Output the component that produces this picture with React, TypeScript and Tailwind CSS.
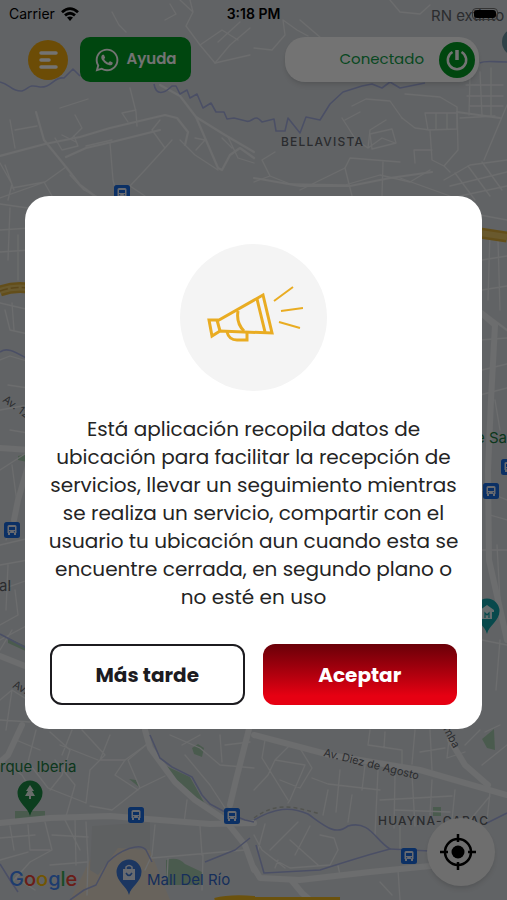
import type { ReactNode } from 'react'
import { FaWhatsapp } from 'react-icons/fa'

const minorRoads = [
  // north-west
  'M112 12 L119 25 L126 32 M190 0 L193 12 L186 26 L200 45 L215 63 L250 55 M193 12 L180 0 M165 20 L176 14 L170 4',
  'M215 63 L230 45 L250 28 M218 42 L240 22 M200 45 L222 30 L238 40',
  'M10 120 L15 148 M15 130 L37 126 M60 108 L88 99 M75 115 L82 128 L72 138',
  'M130 88 L136 112 L137 126 M122 113 L136 110 M122 113 L128 122',
  'M0 163 L12 184 L8 200 M5 165 L14 190 M12 188 L45 182 L66 167 M0 198 L45 182 M44 182 L52 196',
  'M110 143 L113 180 L118 200 M152 130 L165 148 L145 170 L130 186 L145 196 M165 148 L172 140 M160 120 L152 130',
  'M180 140 L195 155 L218 170 M196 150 L205 140 L195 138 M222 138 L232 148 M228 137 L238 158 L254 163',
  'M55 138 L62 150 L78 146 L74 136 M62 135 L76 142 M86 146 L112 140 M70 175 L84 190 L98 197',
  // north-east
  'M283 20 L285 35 L272 50 L254 48 M283 20 L297 30 L308 36 M300 20 L328 44 M390 0 L400 12 L420 14 L430 5',
  'M342 118 L356 140 M352 106 L366 99 L390 101 L402 118 M345 120 L360 112 M356 140 L368 148 L382 138 L395 143 M368 148 L370 130 L386 120',
  'M370 134 L392 129 L396 143 L372 149 Z M402 118 L415 128 L430 130 M425 113 L457 113 L457 129 L428 130 Z M436 113 L436 129 M447 113 L447 129',
  'M405 94 L440 97 L457 107 L458 150 L444 166 M430 130 L432 160 L444 166 L450 172 M460 118 L495 116 M484 160 L507 105',
  'M470 76 L469 115 M480 72 L482 116 M491 68 L491 116 M466 85 L503 85 M467 96 L503 96 M469 106 L503 106',
  'M254 182 L270 176 L290 184 L345 185 L380 175 L410 182 L430 170 M270 176 L262 160 L275 152 M300 190 L345 168 L350 158 L400 162',
  'M345 168 L352 196 M383 162 L382 196 M415 163 L414 150 L432 150 M400 178 L450 196 M444 180 L470 165 L507 160',
  'M455 173 L475 200 M468 166 L490 196 M482 162 L502 190 M450 186 L507 172 M460 196 L507 186',
  // left edge
  'M0 204 L28 208 M10 208 L8 260 M0 230 L30 228 M18 235 L18 280 M0 252 L30 250 M0 303 L30 310 M5 310 L10 330 L28 334 M12 303 L14 330',
  'M0 360 L10 356 L30 362 M8 385 L28 388 M0 410 L28 405 M10 430 L28 433 M0 470 L28 452 M12 465 L18 510 L6 540',
  'M0 545 L30 538 M0 565 L28 560 M8 565 L6 610 M0 590 L28 580 M15 590 L18 615 L0 625 M0 640 L28 625 M0 650 L12 630',
  'M0 700 L12 690 L28 700 M12 690 L6 730 M0 720 L30 722',
  // right edge
  'M480 215 L507 220 M490 232 L488 300 M498 240 L500 310 M482 260 L507 256 M482 290 L507 286 M480 340 L507 338 M482 370 L507 364',
  'M480 395 L507 388 M495 400 L500 430 M482 490 L507 500 M490 515 L507 520 M482 550 L507 550 M497 545 L500 600 M482 640 L507 645 M500 640 L496 690',
  // south-west
  'M36 730 L28 762 L48 788 L86 803 M50 732 L70 750 L62 775 L50 790 M82 730 L105 755 L90 770 L86 803 M110 735 L100 760 L125 760 L146 745',
  'M146 745 L128 760 L140 788 L165 776 M140 788 L112 810 L90 806 M125 760 L115 775 L138 790 M60 745 L98 760 M72 730 L62 755 M16 740 L40 750',
  'M0 760 L22 775 L38 802 M55 760 L75 785 L65 820 L80 850 M75 818 L76 865 M45 822 L52 850 L30 862 L14 880 M28 825 L30 850 L50 850',
  'M0 838 L35 835 M86 822 L88 860 L87 895 M52 835 L88 837 M50 865 L87 862 M10 826 L14 850 M0 860 L28 852 M16 878 L35 890',
  'M155 825 L152 855 L145 870 M187 800 L184 823 M200 826 L202 855 M152 858 L245 850 M168 859 L167 880 M203 855 L202 890',
  'M170 735 L200 748 L220 765 L254 768 M182 745 L200 735 M220 735 L222 762 M185 755 L210 785 L225 808 M225 745 L250 742',
  // south-east
  'M265 740 L262 758 L288 800 M290 745 L275 760 L268 775 L254 790 M275 760 L305 765 M305 765 L290 800 L288 803 M298 745 L312 768 L300 788 L280 780',
  'M328 790 L323 815 M312 778 L328 784 L380 790 M340 770 L336 812 M352 795 L348 822 M365 765 L362 790 M378 770 L375 835 M395 775 L394 828',
  'M370 730 L368 745 L402 750 L402 765 M385 732 L384 748 M415 730 L412 764 M430 730 L432 770 M445 748 L420 752 M450 730 L447 758 L465 752',
  'M412 775 L415 826 M432 780 L430 815 M380 800 L452 796 M395 810 L450 812 M455 790 L452 820 M470 820 L490 796 M490 792 L487 820',
  'M254 835 L262 850 L285 868 M265 824 L258 850 M298 822 L270 850 M310 826 L295 855 M290 840 L318 865 M278 860 L275 868 M320 835 L334 838 L338 850 L330 865 L290 868 L275 860',
  'M465 745 L480 730 M482 765 L507 745 M485 732 L500 725 M400 826 L400 850 M380 882 L392 895 M398 870 L400 900 M338 866 L340 875',
]

const mainRoads = [
  'M0 156 L45 144 L80 137 L110 128 L165 115 L177 118 L188 132 L185 145',
  'M160 85 L180 96 L196 117 L218 168 L222 170 L230 155 L240 148 L254 158',
  'M196 117 L225 135 L254 152',
  'M36 112 L44 140 L66 167 L80 185 L100 200',
  'M66 157 L86 148 L112 142 L160 130',
  'M254 178 L300 186 L350 186 L390 178 L432 172',
  'M457 112 L500 118',
  'M480 310 L507 330',
]

const avenues = [
  'M0 823 L50 818 L110 816 L210 824 L254 823',
  'M22 725 L8 755 L0 762',
  'M145 730 L150 748 L175 782 L195 800 L225 820 L245 845 L254 870',
  'M250 725 L236 780 L230 805',
  'M254 735 L330 755 L420 770 L507 795',
  'M450 740 L465 765 L488 785',
  'M254 868 L260 878 L300 880 L370 872 L440 865',
  'M292 881 L302 893 L310 900',
  'M28 466 L18 500 L14 520',
  'M480 312 L495 325 L491 400 L488 470 L489 560 L507 640',
  'M30 450 L0 448',
  'M0 656 L30 668',
]

const rivers = [
  'M0 82 C10 84 12 92 22 91 C30 88 28 84 40 87 C52 88 54 76 64 78 L73 69 L80 76',
  'M154 84 C156 96 164 94 172 86 L176 86 L180 94 L187 90 L190 98 L197 94 L203 108 L211 103 L216 112 L224 112 L227 119 L234 118 L246 121 C252 124 254 112 262 122 L274 119 L276 131 L285 131 L288 118 L300 133 L306 117 L320 120 L330 104 L343 92 L362 86 L372 84 L382 88 L390 82 L400 88 L425 83',
  'M480 63 C485 60 492 62 507 62',
  'M150 735 L160 758 L172 767 L192 777 L202 795 L210 804 L225 812 L245 820 L254 822',
  'M0 864 L10 880 L18 892 M70 900 L84 890 L96 885 L108 862 C120 850 140 842 146 850 L152 862 M205 862 L235 850 L250 838',
  'M254 820 C275 808 290 806 308 814 C325 826 335 836 348 826 C370 820 375 840 390 849 C370 854 345 862 320 870 L264 873 L256 845',
  'M390 849 L430 851 M487 823 L507 813',
  'M0 634 L30 650',
  'M0 352 C8 346 18 354 30 360',
]

function Bus({ x, y }: { x: number; y: number }) {
  return (
    <g transform={`translate(${x} ${y})`}>
      <rect width="16" height="16" rx="2.5" fill="#1a6be0" />
      <path d="M3.5 4.5q0-1.5 1.5-1.5h6q1.500 0 1.500 1.500V11H3.500z M4 11h2v2H4z M10 11h2v2h-2z" fill="#e8eef8" />
      <path d="M5 5h6v3H5z M5 9.300h1.200v1H5z M9.800 9.300H11v1H9.800z" fill="#1a6be0" />
    </g>
  )
}

function Pin({ x, y, color, children }: { x: number; y: number; color: string; children: ReactNode }) {
  return (
    <g transform={`translate(${x} ${y})`}>
      <path d="M0 0C-2-9-12.500-13-12.500-23A12.500 12.500 0 0 1 12.500-23C12.500-13 2-9 0 0Z" fill={color} />
      {children}
    </g>
  )
}

function CityMap() {
  return (
    <svg
      className="absolute inset-0 h-full w-full"
      viewBox="0 0 507 900"
      preserveAspectRatio="xMidYMid slice"
      role="img"
      aria-label="Mapa"
    >
      <rect width="507" height="900" fill="#d8dce0" />
      <path d="M100 840L150 850L170 900H70Z" fill="#e6dccd" />
      <path d="M92 826L150 822L150 850L118 848L98 875L90 870Z" fill="#d1d4d8" />
      <g fill="#a5cbae">
        <path d="M166 766L190 777L200 795L206 806L196 800L178 784Z" />
        <path d="M192 748L198 744L204 748L202 757L194 754Z" />
        <path d="M166 860Q178 856 185 864L202 872V885H166Z" />
        <rect x="15" y="811" width="30" height="9" />
        <path d="M482 739L494 729L495 750L487 748Z" />
        <rect x="433" y="807" width="8" height="9" />
        <path d="M129 779L136 780L139 787Z" />
        <path d="M18 456L27 454V462L18 460Z" />
        <path d="M8 638L30 648V653L8 643Z" />
      </g>
      <g fill="none" stroke="#eff1f3" strokeLinejoin="round" strokeLinecap="round">
        {minorRoads.map((d) => (
          <path key={d} d={d} strokeWidth="1.300" />
        ))}
        {mainRoads.map((d) => (
          <path key={d} d={d} strokeWidth="2.200" />
        ))}
        {avenues.map((d) => (
          <path key={d} d={d} strokeWidth="6" />
        ))}
      </g>
      <g fill="none" stroke="#a6b0e0" strokeWidth="1.600" strokeLinejoin="round">
        {rivers.map((d) => (
          <path key={d} d={d} />
        ))}
      </g>
      <path d="M254 818C275 803 290 805 320 814" fill="none" stroke="#b5b9b0" strokeDasharray="4 3" strokeWidth="1.500" />
      <g fill="none">
        <path d="M0 291Q14 286 28 288M480 233L507 237" stroke="#dcae3a" strokeWidth="11" />
        <path d="M0 291Q14 286 28 288M480 233L507 237" stroke="#e8c565" strokeWidth="6" />
        <path d="M0 291Q14 286 28 288" stroke="#c99d3a" strokeDasharray="8 3" strokeWidth="1.500" />
        <path d="M215 901Q230 897 254 899L340 900" stroke="#eeb51e" strokeWidth="6" />
      </g>

      <Bus x={114} y={185} />
      <Bus x={4} y={522} />
      <Bus x={483} y={483} />
      <Bus x={501} y={459} />
      <Bus x={128} y={807} />
      <Bus x={224} y={808} />
      <Bus x={401} y={848} />

      <Pin x={30} y={816} color="#1c8a43">
        <path d="M0-31L-4-25H-2L-5-20H-1V-17H1V-20H5L2-25H4Z" fill="#e9f2ec" />
      </Pin>
      <Pin x={129} y={895} color="#3d78d8">
        <path d="M-6-26H6V-15H-6Z" fill="#e8eef8" />
        <path d="M-3-26V-28Q0-31 3-28V-26" fill="none" stroke="#e8eef8" strokeWidth="1.500" />
        <path d="M-3-22Q0-17 3-22" fill="none" stroke="#3d78d8" strokeWidth="1.500" />
      </Pin>
      <Pin x={487} y={634} color="#12a3a8">
        <path d="M-7-24L0-29L7-24V-22H5V-15H-5V-22H-7Z" fill="#e0f2f3" />
        <path d="M-2-16V-21L0-19L2-21V-16" fill="none" stroke="#12a3a8" strokeWidth="1.200" />
      </Pin>
      <circle cx="516" cy="42" r="14" fill="#6c93a0" />

      <g className="font-[Inter,sans-serif]" fill="#5f6368">
        <text x="431" y="21" fontSize="15">RN extinto</text>
        <text x="281" y="146" fontSize="12" className="font-medium tracking-widest">BELLAVISTA</text>
        <text x="378" y="825" fontSize="12" className="font-medium tracking-widest">HUAYNA-CAPAC</text>
        <text fontSize="11" transform="translate(323 756) rotate(14)">Av. Diez de Agosto</text>
        <text fontSize="11" transform="translate(443 729) rotate(62)">mba</text>
        <text fontSize="11" transform="translate(2 401) rotate(36)">Av. 12</text>
        <text fontSize="11" transform="translate(12 687) rotate(28)">Av.</text>
        <text x="-1" y="591" fontSize="15">al</text>
      </g>
      <g className="font-[Inter,sans-serif]" fontSize="15">
        <text x="0" y="772" fill="#1b7a41">rque Iberia</text>
        <text x="476" y="443" fill="#1b7a41">e Sa</text>
        <text x="147" y="885" fill="#3267c9">Mall Del Río</text>
      </g>
      <text x="9" y="886" fontSize="20" className="font-[Inter,sans-serif] font-medium">
        <tspan fill="#4285f4">G</tspan>
        <tspan fill="#ea4335">o</tspan>
        <tspan fill="#fbbc05">o</tspan>
        <tspan fill="#4285f4">g</tspan>
        <tspan fill="#34a853">l</tspan>
        <tspan fill="#ea4335">e</tspan>
      </text>
    </svg>
  )
}

function StatusBar() {
  return (
    <div className="relative grid h-7 grid-cols-3 items-center px-[9px] font-[Inter,sans-serif] text-sm text-black">
      <div className="flex items-center gap-[6px]">
        <span>Carrier</span>
        <svg width="18" height="14" viewBox="0 0 18 14" fill="none" stroke="black" strokeWidth="2.800">
          <path d="M1 5.200Q9-2 17 5.200M4 8.400Q9 4 14 8.400" />
          <path d="M9 14L6 10.600Q9 8.500 12 10.600Z" fill="black" stroke="none" />
        </svg>
      </div>
      <span className="text-center font-semibold">3:18 PM</span>
      <div className="flex justify-end">
        <span className="rounded-[4px] border border-neutral-500 p-px">
          <span className="block h-2 w-[22px] rounded-[3px] bg-black" />
        </span>
      </div>
    </div>
  )
}

function Toolbar() {
  return (
    <header className="relative flex items-center px-[28px] pt-[9px]">
      <button aria-label="Menú" className="flex size-10 items-center justify-center rounded-full bg-[#f0a90e]">
        <svg width="20" height="18" viewBox="0 0 20 18" stroke="white" strokeWidth="3.500" strokeLinecap="round">
          <path d="M3 2H18M3 9H11M3 16H18" />
        </svg>
      </button>
      <button className="ml-3 flex h-[45px] w-[111px] items-center justify-center gap-[6px] rounded-[10px] bg-[#009c22] text-[15px] font-semibold text-white">
        <FaWhatsapp size={26} aria-hidden="true" />
        Ayuda
      </button>
      <button className="ml-auto flex h-[45px] w-[194px] items-center justify-end gap-[15px] rounded-[20px] bg-white pr-1 text-[15px] text-[#12a04a] shadow-md">
        Conectado
        <span className="flex size-9 items-center justify-center rounded-full bg-[#009c22]">
          <svg width="24" height="24" viewBox="0 0 24 24" fill="none" stroke="white" strokeWidth="2.500">
            <path d="M7.500 4A9.200 9.200 0 1 0 16.500 4" />
            <path d="M12 2V12" strokeWidth="3.500" />
          </svg>
        </span>
      </button>
    </header>
  )
}

function Megaphone() {
  return (
    <svg width="98" height="64" viewBox="0 0 98 64" fill="none" stroke="#e9ac22" strokeWidth="3" aria-hidden="true">
      <path d="M4 34H14L58 9L67 47L15 45L7 50Z" />
      <path d="M12 34L15 45M52 13L60 46M33 25Q31 37 39 45" />
      <path d="M22 46Q24 54 32 54H42V46" />
      <path d="M69 15L88 1M76 25L98 22M74 36L95 42" strokeWidth="2" />
    </svg>
  )
}

function LocationDialog() {
  return (
    <div className="absolute inset-0 flex items-center justify-center bg-black/55 px-[25px] pt-[25px]">
      <section
        role="dialog"
        aria-modal="true"
        aria-describedby="location-notice"
        className="flex w-full max-w-[480px] flex-col items-center rounded-3xl bg-white px-[25px] pt-12 pb-6"
      >
        <div className="flex size-[147px] items-center justify-center rounded-full bg-[#f4f4f4]">
          <Megaphone />
        </div>
        <p id="location-notice" className="mt-6 text-center text-xl leading-7 whitespace-nowrap text-[#242424]">
          Está aplicación recopila datos de
          <br />
          ubicación para facilitar la recepción de
          <br />
          servicios, llevar un seguimiento mientras
          <br />
          se realiza un servicio, compartir con el
          <br />
          usuario tu ubicación aun cuando esta se
          <br />
          encuentre cerrada, en segundo plano o
          <br />
          no esté en uso
        </p>
        <div className="mt-[33px] grid w-full grid-cols-2 gap-[18px] text-xl font-bold">
          <button className="h-[61px] rounded-xl border-2 border-[#1c1b1f] bg-white text-[#1c1b1f]">Más tarde</button>
          <button className="h-[61px] rounded-xl bg-linear-to-b from-[#6a0008] to-[#e60012] to-85% text-white">Aceptar</button>
        </div>
      </section>
    </div>
  )
}

export default function App() {
  return (
    <main className="relative min-h-screen overflow-hidden font-[Poppins,Inter,sans-serif]">
      <CityMap />
      <StatusBar />
      <Toolbar />
      <button
        aria-label="Centrar en mi ubicación"
        className="absolute right-[12px] bottom-[14px] flex size-[68px] items-center justify-center rounded-full bg-[#f4f4f4] pr-[6px] shadow-md"
      >
        <svg width="38" height="38" viewBox="0 0 38 38" fill="none" stroke="black" strokeWidth="2.500">
          <circle cx="19" cy="19" r="13" />
          <circle cx="19" cy="19" r="6.500" fill="black" stroke="none" />
          <path d="M19 1V9M19 29V37M1 19H9M29 19H37" />
        </svg>
      </button>
      <LocationDialog />
    </main>
  )
}
